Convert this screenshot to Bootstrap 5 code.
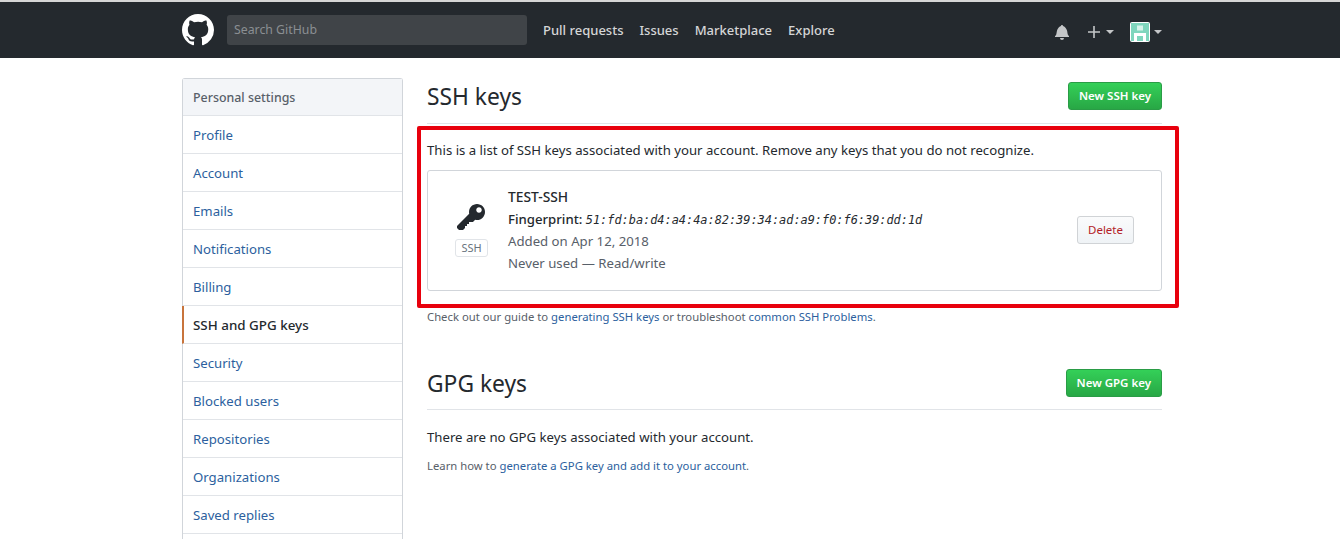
<!DOCTYPE html>
<html lang="en">
<head>
  <meta charset="UTF-8" />
  <title>SSH and GPG keys</title>
  <link href="https://cdn.jsdelivr.net/npm/bootstrap@5.3.3/dist/css/bootstrap.min.css" rel="stylesheet" />
  <style>
    html, body { height: 539px; overflow: hidden; }
    body { font-family: "Noto Sans", "Open Sans", sans-serif; font-size: 13.2px; color: #24292e; background: #fff; position: relative; }
    a { color: #0366d6; text-decoration: none; }

    /* top bar */
    .gh-top { background: #24292e; height: 58px; border-top: 2px solid #d6d6d6; padding: 0 178px 0 182px; }
    .gh-logo { width: 32px; height: 32px; fill: #fff; }
    .gh-search { width: 300px; height: 30px; background: #404448; border-radius: 3px; color: #8b8f93; font-size: 12.3px; line-height: 29px; padding-left: 7px; margin-left: 13px; margin-right: 8px; }
    .gh-link { color: rgba(255,255,255,.82); font-weight: 500; font-size: 13px; margin-left: 8px; margin-right: 8px; padding-top: 2px; }
    .gh-right { padding-top: 4px; }
    .gh-caret { width: 0; height: 0; border: 4px solid transparent; border-top-color: #c4c6c8; border-bottom: 0; margin-left: 6px; }
    .gh-avatar + .gh-caret { margin-left: 4px; }
    .gh-icon { fill: #c4c6c8; }
    .plus-icon { margin-left: 19px; }
    .gh-avatar { width: 20px; height: 20px; margin-left: 16px; }

    /* sidebar */
    .page-wrap { padding: 20px 178px 0 182px; gap: 24px; }
    .side-menu { width: 221px; height: 461px; flex: none; border: 1px solid #d1d5da; border-bottom: 0; border-radius: 3px 3px 0 0; }
    .side-head { height: 37px; line-height: 37px; background: #f3f5f8; color: #586069; font-weight: 500; font-size: 12.4px; padding-left: 10px; border-bottom: 1px solid #e1e4e8; }
    .side-item { display: block; height: 38px; line-height: 37px; padding-top: 1px; padding-left: 10px; font-size: 13.2px; color: #2c5f9e; border-bottom: 1px solid #e1e4e8; }
    .side-item.is-on { color: #24292e; font-weight: 500; font-size: 13.4px; border-left: 2px solid #c8743c; margin-left: -1px; padding-left: 9px; }

    /* main */
    .main-col { width: 735px; flex: none; }
    .sec-head { border-bottom: 1px solid #e1e4e8; }
    .ssh-head { padding: 3px 0 10px; }
    .ssh-head .btn-new { margin-top: -2px; }
    .gpg-head { margin-top: 42px; padding-bottom: 9px; }
    .sec-title { font-size: 22.8px; font-weight: 400; margin: 0; line-height: 32px; }
    .btn-new { background: linear-gradient(#34d058, #28a745); border: 1px solid #2a9c46; border-radius: 3px; color: #fff; font-size: 11.5px; font-weight: 600; padding: 0 10px; height: 28px; line-height: 26px; }
    .gpg-head .btn-new { margin-top: -1px; }
    .body-line { font-size: 13.2px; line-height: 20px; margin-top: 16px; }
    .gpg-head + .body-line { margin-top: 17px; }
    .key-box { border: 1px solid #d1d5da; border-radius: 3px; height: 121px; margin-top: 10px; padding: 0 27px; }
    .key-icon-wrap { width: 33px; margin-right: 20px; }
    .key-icon { width: 28px; height: 32px; fill: #24292e; margin: -2px 0 0 -2px; }
    .ssh-tag { border: 1px solid #e1e4e8; border-radius: 3px; color: #6a737d; font-size: 11px; line-height: 16px; padding: 0 5px; margin-top: 5px; }
    .key-info { margin-bottom: 1px; }
    .key-name { font-weight: 500; font-size: 13.8px; line-height: 22px; }
    .key-line { line-height: 22px; }
    .key-mute { color: #586069; }
    .key-added { margin-top: -1px; }
    .key-print { font-family: "DejaVu Sans Mono", "Liberation Mono", monospace; font-style: italic; font-size: 11.9px; }
    .btn-del { background: linear-gradient(#fafbfc, #eff3f6); border: 1px solid #d0d3d6; border-radius: 3px; color: #b31d28; font-size: 11.5px; height: 28px; line-height: 26px; padding: 0 10px; margin-top: -2px; }
    .tiny-note { font-size: 11.3px; color: #586069; }
    .tiny-note a { color: #2c5f9e; }
    .note-a { margin-top: 18px; }
    .note-b { margin-top: 11px; }

    /* hand-drawn red annotation over the screenshot */
    .red-mark { position: absolute; left: 417px; top: 126px; width: 762px; height: 182px; border: 4px solid #e8000d; border-radius: 2px; }
  </style>
</head>
<body>
  <!-- Top bar -->
  <div class="gh-top d-flex align-items-center">
    <svg class="gh-logo" viewBox="0 0 16 16"><path d="M8 0C3.58 0 0 3.58 0 8c0 3.54 2.29 6.53 5.47 7.59.4.07.55-.17.55-.38 0-.19-.01-.82-.01-1.49-2.01.37-2.53-.49-2.69-.94-.09-.23-.48-.94-.82-1.13-.28-.15-.68-.52-.01-.53.63-.01 1.08.58 1.23.82.72 1.21 1.87.87 2.33.66.07-.52.28-.87.51-1.07-1.78-.2-3.64-.89-3.64-3.95 0-.87.31-1.59.82-2.15-.08-.2-.36-1.02.08-2.12 0 0 .67-.21 2.2.82.64-.18 1.32-.27 2-.27.68 0 1.36.09 2 .27 1.53-1.04 2.2-.82 2.2-.82.44 1.1.16 1.92.08 2.12.51.56.82 1.27.82 2.15 0 3.07-1.87 3.75-3.65 3.95.29.25.54.73.54 1.48 0 1.07-.01 1.93-.01 2.2 0 .21.15.46.55.38A8.013 8.013 0 0016 8c0-4.42-3.58-8-8-8z"/></svg>
    <div class="gh-search">Search GitHub</div>
    <a class="gh-link" href="#">Pull requests</a>
    <a class="gh-link" href="#">Issues</a>
    <a class="gh-link" href="#">Marketplace</a>
    <a class="gh-link" href="#">Explore</a>
    <div class="gh-right ms-auto d-flex align-items-center">
      <svg class="gh-icon" width="14" height="16" viewBox="0 0 14 16"><path d="M13.99 11.991v1H0v-1l.73-.58c.769-.769.809-2.547 1.189-4.416.77-3.767 4.077-4.996 4.077-4.996 0-.55.45-1 1-1 .55 0 1 .45 1 1 0 0 3.387 1.229 4.156 4.996.38 1.879.42 3.657 1.19 4.417l.66.58h-.012zm-6.995 4a2 2 0 0 0 2-2h-4a2 2 0 0 0 2 2z"/></svg>
      <svg class="gh-icon plus-icon" width="12" height="16" viewBox="0 0 12 16"><path d="M12 8.8H6.8V14H5.2V8.8H0V7.2h5.2V2h1.6v5.2H12v1.6z"/></svg>
      <span class="gh-caret"></span>
      <svg class="gh-avatar" viewBox="0 0 20 20"><rect width="20" height="20" rx="2" fill="#fff"/><rect x="1" y="1" width="18" height="18" fill="#7fd6bd"/><rect x="7" y="3.5" width="6" height="5" fill="#d8f5ec"/><path d="M4 19v-8h12v8h-3v-5H7v5z" fill="#fff"/></svg>
      <span class="gh-caret"></span>
    </div>
  </div>

  <div class="page-wrap d-flex align-items-start">
    <!-- Settings menu -->
    <nav class="side-menu">
      <div class="side-head">Personal settings</div>
      <a class="side-item" href="#">Profile</a>
      <a class="side-item" href="#">Account</a>
      <a class="side-item" href="#">Emails</a>
      <a class="side-item" href="#">Notifications</a>
      <a class="side-item" href="#">Billing</a>
      <a class="side-item is-on" href="#">SSH and GPG keys</a>
      <a class="side-item" href="#">Security</a>
      <a class="side-item" href="#">Blocked users</a>
      <a class="side-item" href="#">Repositories</a>
      <a class="side-item" href="#">Organizations</a>
      <a class="side-item" href="#">Saved replies</a>
    </nav>

    <!-- SSH and GPG sections -->
    <main class="main-col">
      <div class="sec-head ssh-head d-flex justify-content-between align-items-center">
        <h2 class="sec-title">SSH keys</h2>
        <a class="btn-new" href="#">New SSH key</a>
      </div>
      <div class="body-line">This is a list of SSH keys associated with your account. Remove any keys that you do not recognize.</div>
      <div class="key-box d-flex align-items-center">
        <div class="key-icon-wrap d-flex flex-column align-items-center">
          <svg class="key-icon" viewBox="0 0 14 16"><path d="M12.83 2.17C12.08 1.42 11.14 1.03 10 1c-1.13.03-2.08.42-2.83 1.17S6.04 3.86 6.01 5c0 .3.03.59.09.89L0 12v1l1 1h2l1-1v-1h1v-1h1v-1h2l1.09-1.11c.3.08.59.11.91.11 1.14-.03 2.08-.42 2.83-1.17S13.97 6.14 14 5c-.03-1.14-.42-2.08-1.17-2.83zM11 5.38c-.77 0-1.38-.61-1.38-1.38 0-.77.61-1.38 1.38-1.38.77 0 1.38.61 1.38 1.38 0 .77-.61 1.38-1.38 1.38z"/></svg>
          <span class="ssh-tag">SSH</span>
        </div>
        <div class="key-info flex-grow-1">
          <div class="key-name">TEST-SSH</div>
          <div class="key-line"><span class="fw-medium">Fingerprint:</span> <span class="key-print">51:fd:ba:d4:a4:4a:82:39:34:ad:a9:f0:f6:39:dd:1d</span></div>
          <div class="key-line key-mute key-added">Added on Apr 12, 2018</div>
          <div class="key-line key-mute">Never used — Read/write</div>
        </div>
        <a class="btn-del" href="#">Delete</a>
      </div>
      <div class="tiny-note note-a">Check out our guide to <a href="#">generating SSH keys</a> or troubleshoot <a href="#">common SSH Problems</a>.</div>

      <div class="sec-head gpg-head d-flex justify-content-between align-items-center">
        <h2 class="sec-title">GPG keys</h2>
        <a class="btn-new" href="#">New GPG key</a>
      </div>
      <div class="body-line">There are no GPG keys associated with your account.</div>
      <div class="tiny-note note-b">Learn how to <a href="#">generate a GPG key and add it to your account</a>.</div>
    </main>
  </div>

  <div class="red-mark"></div>
</body>
</html>
